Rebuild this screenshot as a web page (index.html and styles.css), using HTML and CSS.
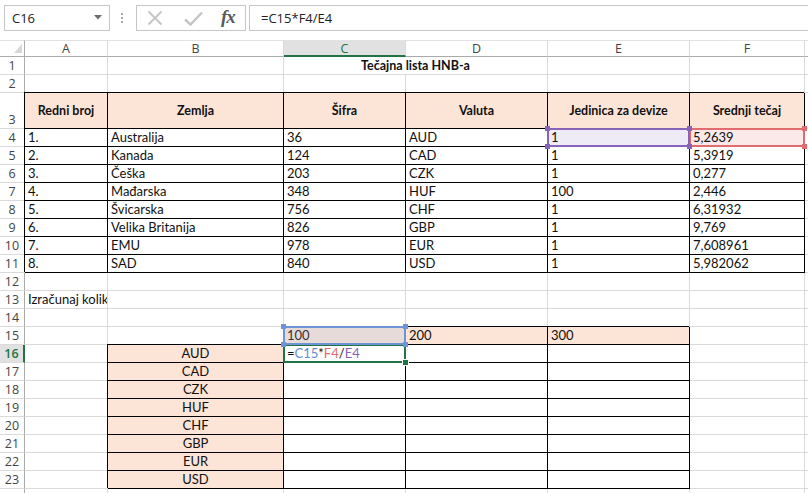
FILE: index.html
```html
<!DOCTYPE html>
<html lang="hr">
<head>
<meta charset="utf-8">
<title>Tečajna lista HNB-a</title>
<link rel="stylesheet" href="styles.css">
</head>
<body>
<div class="toolbar">
  <div class="namebox"><span>C16</span><svg class="dd" width="8" height="5" viewBox="0 0 8 5"><polygon points="0,0 8,0 4,4.5" fill="#6d6d6d"/></svg></div>
  <div class="dots"><i></i><i></i><i></i></div>
  <div class="fxbox">
    <svg width="16" height="16" viewBox="0 0 16 16"><path d="M1.5 1.5 L14.5 14.5 M14.5 1.5 L1.5 14.5" stroke="#c4c4c4" stroke-width="1.8" fill="none"/></svg>
    <svg width="19" height="15" viewBox="0 0 19 15"><path d="M1 8.5 L6.5 13.5 L18 1.5" stroke="#c4c4c4" stroke-width="2.4" fill="none"/></svg>
    <span class="fx">fx</span>
  </div>
  <div class="formula">=C15*F4/E4</div>
</div>

<div class="sheet">
  <div class="corner"><svg width="8" height="9" viewBox="0 0 8 9"><polygon points="8,0 8,9 0,9" fill="#d6d6d6"/></svg></div>
  <div class="ch">A</div><div class="ch">B</div><div class="ch sel">C</div><div class="ch">D</div><div class="ch">E</div><div class="ch">F</div><div class="ch last"></div>

  <div class="rh">1</div><div class="c"></div><div class="c"></div><div class="c title">Tečajna lista HNB-a</div><div class="c"></div><div class="c"></div><div class="c"></div>

  <div class="rh">2</div><div class="c"></div><div class="c"></div><div class="c"></div><div class="c"></div><div class="c"></div><div class="c"></div><div class="c"></div>

  <div class="rh tall">3</div><div class="c k pk hd">Redni broj</div><div class="c k pk hd">Zemlja</div><div class="c k pk hd">Šifra</div><div class="c k pk hd">Valuta</div><div class="c k pk hd">Jedinica za devize</div><div class="c k pk hd">Srednji tečaj</div><div class="c"></div>

  <div class="rh">4</div><div class="c k">1.</div><div class="c k">Australija</div><div class="c k">36</div><div class="c k">AUD</div><div class="c k ref-e">1<span class="box purple"><b class="tl"></b><b class="tr"></b><b class="bl"></b><b class="br"></b></span></div><div class="c k ref-f">5,2639<span class="box red"><b class="tl"></b><b class="tr"></b><b class="bl"></b><b class="br"></b></span></div><div class="c"></div>

  <div class="rh">5</div><div class="c k">2.</div><div class="c k">Kanada</div><div class="c k">124</div><div class="c k">CAD</div><div class="c k">1</div><div class="c k">5,3919</div><div class="c"></div>

  <div class="rh">6</div><div class="c k">3.</div><div class="c k">Češka</div><div class="c k">203</div><div class="c k">CZK</div><div class="c k">1</div><div class="c k">0,277</div><div class="c"></div>

  <div class="rh">7</div><div class="c k">4.</div><div class="c k">Mađarska</div><div class="c k">348</div><div class="c k">HUF</div><div class="c k">100</div><div class="c k">2,446</div><div class="c"></div>

  <div class="rh">8</div><div class="c k">5.</div><div class="c k">Švicarska</div><div class="c k">756</div><div class="c k">CHF</div><div class="c k">1</div><div class="c k">6,31932</div><div class="c"></div>

  <div class="rh">9</div><div class="c k">6.</div><div class="c k">Velika Britanija</div><div class="c k">826</div><div class="c k">GBP</div><div class="c k">1</div><div class="c k">9,769</div><div class="c"></div>

  <div class="rh">10</div><div class="c k">7.</div><div class="c k">EMU</div><div class="c k">978</div><div class="c k">EUR</div><div class="c k">1</div><div class="c k">7,608961</div><div class="c"></div>

  <div class="rh">11</div><div class="c k">8.</div><div class="c k">SAD</div><div class="c k">840</div><div class="c k">USD</div><div class="c k">1</div><div class="c k">5,982062</div><div class="c"></div>

  <div class="rh">12</div><div class="c"></div><div class="c"></div><div class="c"></div><div class="c"></div><div class="c"></div><div class="c"></div><div class="c"></div>

  <div class="rh">13</div><div class="c">Izračunaj kolik</div><div class="c"></div><div class="c"></div><div class="c"></div><div class="c"></div><div class="c"></div><div class="c"></div>

  <div class="rh">14</div><div class="c"></div><div class="c"></div><div class="c"></div><div class="c"></div><div class="c"></div><div class="c"></div><div class="c"></div>

  <div class="rh">15</div><div class="c"></div><div class="c"></div><div class="c k pk sel15">100<span class="box blue"><b class="tl"></b><b class="tr"></b><b class="bl"></b><b class="br"></b></span></div><div class="c k pk">200</div><div class="c k pk">300</div><div class="c"></div><div class="c"></div>

  <div class="rh sel">16</div><div class="c"></div><div class="c k pk ctr">AUD</div><div class="c k active">=<span class="r-blue">C15</span>*<span class="r-red">F4</span>/<span class="r-purple">E4</span><span class="box green"><b class="fill"></b></span></div><div class="c k"></div><div class="c k"></div><div class="c"></div><div class="c"></div>

  <div class="rh">17</div><div class="c"></div><div class="c k pk ctr">CAD</div><div class="c k"></div><div class="c k"></div><div class="c k"></div><div class="c"></div><div class="c"></div>

  <div class="rh">18</div><div class="c"></div><div class="c k pk ctr">CZK</div><div class="c k"></div><div class="c k"></div><div class="c k"></div><div class="c"></div><div class="c"></div>

  <div class="rh">19</div><div class="c"></div><div class="c k pk ctr">HUF</div><div class="c k"></div><div class="c k"></div><div class="c k"></div><div class="c"></div><div class="c"></div>

  <div class="rh">20</div><div class="c"></div><div class="c k pk ctr">CHF</div><div class="c k"></div><div class="c k"></div><div class="c k"></div><div class="c"></div><div class="c"></div>

  <div class="rh">21</div><div class="c"></div><div class="c k pk ctr">GBP</div><div class="c k"></div><div class="c k"></div><div class="c k"></div><div class="c"></div><div class="c"></div>

  <div class="rh">22</div><div class="c"></div><div class="c k pk ctr">EUR</div><div class="c k"></div><div class="c k"></div><div class="c k"></div><div class="c"></div><div class="c"></div>

  <div class="rh">23</div><div class="c"></div><div class="c k pk ctr">USD</div><div class="c k"></div><div class="c k"></div><div class="c k"></div><div class="c"></div><div class="c"></div>

  <div class="rh"></div><div class="c"></div><div class="c"></div><div class="c"></div><div class="c"></div><div class="c"></div><div class="c"></div><div class="c"></div>
</div>
</body>
</html>
```

FILE: styles.css
```css
html, body {
  margin: 0;
  padding: 0;
  background: #fff;
  overflow: hidden;
}

body {
  width: 808px;
  height: 493px;
  font-family: Lato, "Liberation Sans", sans-serif;
}

/* ---------- formula bar ---------- */
.toolbar {
  height: 40px;
  box-sizing: border-box;
  padding-top: 5px;
  display: flex;
  align-items: flex-start;
}

.namebox {
  margin-left: 4px;
  width: 106px;
  height: 26px;
  box-sizing: border-box;
  border: 1px solid #c6c6c6;
  display: flex;
  align-items: center;
  justify-content: space-between;
  padding: 0 7px 0 7px;
  font: 13px "Open Sans", sans-serif;
  color: #222;
}

.namebox .dd {
  margin-top: -1px;
}

.dots {
  width: 24px;
  height: 26px;
  padding-right: 2px;
  display: flex;
  flex-direction: column;
  align-items: center;
  justify-content: center;
  gap: 2px;
}

.dots i {
  display: block;
  width: 2px;
  height: 2px;
  background: #a8a8a8;
}

.fxbox {
  width: 110px;
  height: 26px;
  box-sizing: border-box;
  border: 1px solid #c6c6c6;
  display: flex;
  align-items: center;
  padding-left: 10px;
  gap: 21px;
}

.fx {
  font: italic bold 19px "Liberation Serif", serif;
  color: #5a5a5a;
  margin-left: -3px;
  margin-top: -3px;
  letter-spacing: -1px;
}

.formula {
  margin-left: 3px;
  flex: 1;
  height: 26px;
  box-sizing: border-box;
  border: 1px solid #c6c6c6;
  border-right: none;
  padding-left: 11px;
  font: 13px "Open Sans", sans-serif;
  line-height: 24px;
  color: #222;
}

/* ---------- sheet grid ---------- */
.sheet {
  display: grid;
  grid-template-columns: 25px 83px 176px 122px 142px 142px 115px 1fr;
  grid-template-rows: 17px 18px 18px 36px repeat(21, 18px);
}

.corner,
.ch {
  box-sizing: border-box;
  border-top: 1px solid #e2e2e2;
  border-bottom: 1px solid #ababab;
  border-right: 1px solid #dadada;
  background: #fff;
}

.corner {
  border-right-color: #ababab;
  display: flex;
  align-items: flex-end;
  justify-content: flex-end;
  padding: 0 2px 3px 0;
}

.ch {
  font: 12.5px "Open Sans", sans-serif;
  color: #444;
  text-align: center;
  line-height: 15px;
}

.ch.sel {
  background: #e1e1e1;
  color: #217346;
  border-bottom: 2px solid #217346;
}

.ch.last {
  border-right: none;
}

.rh {
  box-sizing: border-box;
  border-right: 1px solid #ababab;
  border-bottom: 1px solid #dadada;
  font: 12.5px "Open Sans", sans-serif;
  color: #444;
  text-align: center;
  line-height: 17px;
}

.rh.tall {
  display: flex;
  align-items: flex-end;
  justify-content: center;
}

.rh.sel {
  background: #e1e1e1;
  color: #217346;
  font-weight: 600;
  border-right: 2px solid #217346;
}

.c {
  box-sizing: border-box;
  border-right: 1px solid #dadada;
  border-bottom: 1px solid #dadada;
  padding: 0 3px;
  font-size: 13px;
  line-height: 17px;
  color: #111;
  white-space: nowrap;
  overflow: hidden;
  position: relative;
}

/* black "all borders" cells */
.c.k {
  border-right-color: #000;
  border-bottom-color: #000;
  box-shadow: -1px -1px 0 #000;
  overflow: visible;
}

.c.pk {
  background: #fce4d6;
}

.c.hd {
  font-weight: bold;
  font-size: 12.5px;
  display: flex;
  align-items: center;
  justify-content: center;
}

.c.ctr {
  text-align: center;
}

.c.title {
  grid-column: span 2;
  text-align: center;
  font-weight: bold;
  font-size: 12.5px;
  line-height: 18px;
}

.c.ref-e {
  background: #efebf6;
}

.c.ref-f {
  background: #fbe9e9;
}

.c.sel15 {
  background: #e6dbd8;
  color: #333;
}

/* reference / selection boxes */
.box {
  position: absolute;
  top: -1px;
  left: -1px;
  right: -1px;
  bottom: -1px;
  border: 2px solid;
  pointer-events: none;
}

.box b {
  position: absolute;
  width: 5px;
  height: 5px;
}

.box .tl { top: -4px; left: -4px; }
.box .tr { top: -4px; right: -4px; }
.box .bl { bottom: -4px; left: -4px; }
.box .br { bottom: -4px; right: -4px; }

.box.purple { border-color: #8764b8; z-index: 3; }
.box.purple b { background: #8764b8; }

.box.red { border-color: #e06c6f; z-index: 2; }
.box.red b { background: #e06c6f; }

.box.blue { border-color: #6e93d6; z-index: 3; }
.box.blue b { background: #6e93d6; }

.box.green { border-color: #217346; z-index: 2; }

.box .fill {
  right: -5px;
  bottom: -5px;
  width: 5px;
  height: 5px;
  background: #217346;
  border: 1px solid #fff;
}

.r-blue { color: #5b8bd8; }
.r-red { color: #e06c6f; }
.r-purple { color: #8764b8; }
```
